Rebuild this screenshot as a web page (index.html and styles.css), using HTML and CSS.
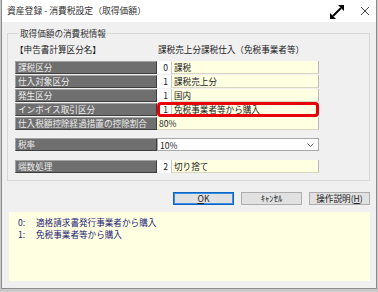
FILE: index.html
```html
<!DOCTYPE html>
<html lang="ja">
<head>
<meta charset="utf-8">
<title>資産登録 - 消費税設定（取得価額）</title>
<link rel="stylesheet" href="styles.css">
</head>
<body>
<div class="window">
  <div class="titlebar">
    <span class="title">資産登録 - 消費税設定（取得価額）</span>
    <div class="tb-icons">
      <svg class="ico-expand" width="14" height="14" viewBox="0 0 14 14">
        <line x1="3" y1="11" x2="11" y2="3" stroke="#000" stroke-width="2"/>
        <polygon points="0,14 0,8 6,14" fill="#000"/>
        <polygon points="14,0 8,0 14,6" fill="#000"/>
      </svg>
      <svg class="ico-close" width="10" height="10" viewBox="0 0 10 10">
        <line x1="1" y1="1" x2="9" y2="9" stroke="#444" stroke-width="1"/>
        <line x1="9" y1="1" x2="1" y2="9" stroke="#444" stroke-width="1"/>
      </svg>
    </div>
  </div>
  <div class="body">
    <fieldset class="group">
      <legend>取得価額の消費税情報</legend>
      <div class="head">
        <span class="head-l">【申告書計算区分名】</span>
        <span class="head-r">課税売上分課税仕入（免税事業者等）</span>
      </div>
      <div class="rows">
        <div class="row"><div class="lbl">課税区分</div><div class="pair"><div class="num">0</div><div class="val">課税</div></div></div>
        <div class="row"><div class="lbl">仕入対象区分</div><div class="pair"><div class="num">1</div><div class="val">課税売上分</div></div></div>
        <div class="row"><div class="lbl">発生区分</div><div class="pair"><div class="num">1</div><div class="val">国内</div></div></div>
        <div class="row"><div class="lbl">インボイス取引区分</div><div class="pair hl"><div class="num">1</div><div class="val">免税事業者等から購入</div></div></div>
        <div class="row"><div class="lbl">仕入税額控除経過措置の控除割合</div><div class="pair"><div class="val full">80%</div></div></div>
      </div>
      <div class="row rate"><div class="lbl">税率</div>
        <div class="select"><span>10%</span>
          <svg class="chev" width="7" height="4" viewBox="0 0 7 4"><polyline points="0.5,0.5 3.5,3.5 6.5,0.5" fill="none" stroke="#666" stroke-width="1"/></svg>
        </div>
      </div>
      <div class="row round"><div class="lbl">端数処理</div><div class="pair"><div class="num">2</div><div class="val">切り捨て</div></div></div>
    </fieldset>
    <div class="buttons">
      <button class="btn default"><u>O</u>K</button>
      <button class="btn">ｷｬﾝｾﾙ</button>
      <button class="btn">操作説明(<u>H</u>)</button>
    </div>
    <div class="info">
      <div class="info-line"><span class="info-no">0:</span><span>適格請求書発行事業者から購入</span></div>
      <div class="info-line"><span class="info-no">1:</span><span>免税事業者等から購入</span></div>
    </div>
  </div>
</div>
</body>
</html>
```

FILE: styles.css
```css
* { box-sizing: border-box; }
html, body { margin: 0; padding: 0; }
body {
  width: 378px;
  height: 292px;
  background: #c9c9c9;
  font-family: "Noto Sans CJK JP", "Noto Sans", sans-serif;
  font-size: 8.6px;
  line-height: 12px;
  color: #222;
  overflow: hidden;
}
.window {
  width: 376px;
  height: 289px;
  margin-left: 1px;
  border: 1px solid #8c8c8c;
  border-top: none;
  background: #f0f0f0;
  display: flex;
  flex-direction: column;
}
.titlebar {
  height: 22px;
  background: #fff;
  display: flex;
  align-items: center;
  padding-left: 5px;
  padding-right: 3px;
}
.title { color: #333; font-size: 8.8px; }
.tb-icons {
  margin-left: auto;
  display: flex;
  align-items: center;
  gap: 16px;
}
.ico-expand { display: block; margin-top: 1px; }
.ico-close { display: block; margin-right: 3px; }

.body {
  flex: 1;
  padding: 5px 6px 0 5px;
  display: flex;
  flex-direction: column;
}
.group {
  margin: 0;
  padding: 4px 7px 7px 7px;
  border: 1px solid #d8d8d8;
  min-inline-size: 0;
}
.group legend {
  padding: 0 1px;
  margin-left: 4px;
  line-height: 12px;
  color: #333;
}
.head {
  display: flex;
  height: 12px;
  margin-bottom: 6px;
  color: #222;
}
.head-l { width: 143px; flex: none; }

.rows { display: flex; flex-direction: column; gap: 1px; }
.row { display: flex; height: 13px; }
.lbl {
  flex: none;
  width: 142px;
  background: #6f6f6f;
  color: #ececec;
  border-top: 1px solid #a3a3a3;
  border-left: 1px solid #a3a3a3;
  border-bottom: 1px solid #3e3e3e;
  border-right: 1px solid #3e3e3e;
  padding-left: 2px;
  line-height: 11px;
  white-space: nowrap;
  overflow: hidden;
}
.pair {
  flex: none;
  width: 162px;
  display: flex;
  position: relative;
}
.num {
  flex: none;
  width: 15px;
  background: #fff;
  text-align: right;
  padding-right: 3px;
  border-right: 1px solid #c8c8c8;
  line-height: 13px;
}
.val {
  flex: 1 1 0;
  min-width: 0;
  background: #ffffe1;
  border-right: 1px solid #b8b8b8;
  border-bottom: 1px solid #d8d8c0;
  padding-left: 2px;
  line-height: 12px;
  white-space: nowrap;
}
.pair.hl::after {
  content: "";
  position: absolute;
  left: 0;
  right: 0;
  top: -1px;
  bottom: -1px;
  border: 3px solid #e8000b;
  border-radius: 4px;
}
.row.rate { margin-top: 8px; }
.row.round { margin-top: 9px; }
.select {
  flex: none;
  width: 162px;
  background: #fff;
  border: 1px solid #a8a8a8;
  display: flex;
  align-items: center;
  padding-left: 2px;
  padding-right: 4px;
}
.select .chev { margin-left: auto; display: block; }

.buttons {
  display: flex;
  justify-content: flex-end;
  gap: 7px;
  margin-top: 11px;
}
.btn {
  width: 61px;
  height: 13px;
  padding: 0;
  background: #e1e1e1;
  border: 1px solid #adadad;
  font-family: inherit;
  font-size: 8.6px;
  line-height: 11px;
  color: #222;
}
.btn.default {
  border: 1px solid #0a64c8;
  box-shadow: inset 0 0 0 1px #3d8ee0;
}
.info {
  margin-top: 7px;
  margin-left: 2px;
  height: 69px;
  background: #ffffe1;
  padding: 4px 0 0 9px;
  color: #232378;
}
.info-line { display: flex; }
.info-no { width: 18px; flex: none; }
```
